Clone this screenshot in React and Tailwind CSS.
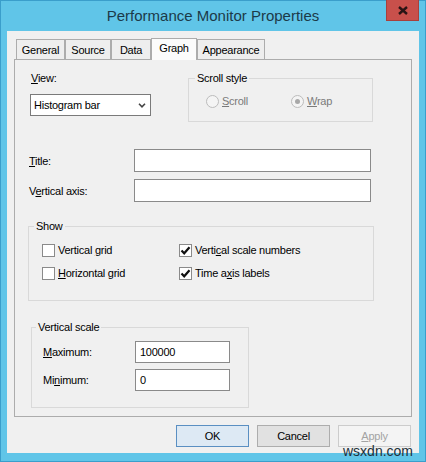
import React from 'react'

const U = ({ children }) => <span className="underline underline-offset-[1px]">{children}</span>

const Check = ({ checked }) => (
  <span className="w-[13px] h-[13px] border border-[#8a8a8a] bg-white flex items-center justify-center shrink-0">
    {checked && (
      <svg width="11" height="11" viewBox="0 0 11 11">
        <path d="M1.5 5.5 L4.2 8.3 L9.5 2.2" fill="none" stroke="#111" strokeWidth="2.2" />
      </svg>
    )}
  </span>
)

const Radio = ({ checked }) => (
  <span className="w-[13px] h-[13px] rounded-full border border-[#bcbcbc] bg-[#f4f4f4] flex items-center justify-center shrink-0">
    {checked && <span className="w-[5px] h-[5px] rounded-full bg-[#a8a8a8]" />}
  </span>
)

const Tab = ({ label, w, active }) =>
  active ? (
    <div className={`relative z-10 h-[22px] ${w} border border-b-0 border-[#acacac] bg-[#fbfbfb] flex justify-center pt-[1px]`}>
      {label}
    </div>
  ) : (
    <div className={`mt-[1px] h-[20px] ${w} border border-b-0 border-[#acacac] bg-[#eeeeee] flex justify-center pt-[2px]`}>
      {label}
    </div>
  )

const TextBox = ({ w, h, value }) => (
  <div className={`${w} ${h} border border-[#8a8a8a] bg-white flex items-center pl-[4px]`}>{value}</div>
)

export default function App() {
  return (
    <div className="relative w-[426px] h-[462px] bg-[#60c5e8] shadow-[inset_0_0_0_1px_#3a9ecb] flex flex-col px-[7px] pb-[9px] font-['Liberation_Sans',Arial,sans-serif] text-[11px] leading-[16px] tracking-[-0.25px] text-black">
      {/* title bar */}
      <div className="relative h-[31px] flex items-center justify-center shrink-0">
        <div className="text-[15px] leading-[31px] tracking-normal text-[#1c3a48]">Performance Monitor Properties</div>
        <div className="absolute right-0 top-0 w-[33px] h-[21px] bg-[#c8504b] border border-t-0 border-[#a8403c] flex items-center justify-center">
          <svg width="10" height="9" viewBox="0 0 10 9">
            <path d="M1 1 L9 8 M9 1 L1 8" stroke="#2a1414" strokeWidth="2.4" />
          </svg>
        </div>
      </div>

      {/* client */}
      <div className="flex-1 bg-[#f0f0f0] flex flex-col px-[7px] pt-[7px]">
        <div className="flex items-start h-[21px] pl-[2px]">
          <Tab label="General" w="w-[49px]" />
          <Tab label="Source" w="w-[46px]" />
          <Tab label="Data" w="w-[40px]" />
          <Tab label="Graph" w="w-[46px]" active />
          <Tab label="Appearance" w="w-[68px]" />
        </div>

        <div className="h-[358px] border border-[#acacac] bg-[#f0f0f0] flex flex-col">
          {/* view + scroll style */}
          <div className="flex items-start mt-[10px]">
            <div className="flex flex-col ml-[15px] w-[121px]">
              <div className="pl-[1px]"><U>V</U>iew:</div>
              <div className="mt-[8px] h-[22px] border border-[#7a7a7a] bg-white flex items-center justify-between pl-[3px] pr-[4px]">
                <span>Histogram bar</span>
                <svg width="8" height="5" viewBox="0 0 8 5">
                  <path d="M1 0.8 L4 3.8 L7 0.8" fill="none" stroke="#444" strokeWidth="1.6" />
                </svg>
              </div>
            </div>
            <fieldset className="ml-[37px] w-[185px] border border-[#d9d9d9] pl-[6px] pb-[12px]">
              <legend className="px-[2px]">Scroll style</legend>
              <div className="ml-[11px] mt-[7px] flex items-center text-[#7a7a7a]">
                <div className="w-[85px] flex items-center gap-[3px]">
                  <Radio />
                  <span><U>S</U>croll</span>
                </div>
                <div className="flex items-center gap-[3px]">
                  <Radio checked />
                  <span><U>W</U>rap</span>
                </div>
              </div>
            </fieldset>
          </div>

          {/* title / vertical axis */}
          <div className="flex items-center mt-[27px] ml-[14px]">
            <div className="w-[105px]"><U>T</U>itle:</div>
            <TextBox w="w-[237px]" h="h-[23px]" />
          </div>
          <div className="flex items-center mt-[7px] ml-[14px]">
            <div className="w-[105px]">V<U>e</U>rtical axis:</div>
            <TextBox w="w-[237px]" h="h-[23px]" />
          </div>

          {/* show */}
          <fieldset className="mt-[16px] ml-[13px] w-[346px] border border-[#d9d9d9] pl-[5px] pb-[19px]">
            <legend className="px-[2px]">Show</legend>
            <div className="ml-[8px] mt-[8px] flex items-center">
              <div className="w-[137px] flex items-center gap-[3px]">
                <Check />
                <span>Vertical <U>g</U>rid</span>
              </div>
              <div className="flex items-center gap-[3px]">
                <Check checked />
                <span>Verti<U>c</U>al scale numbers</span>
              </div>
            </div>
            <div className="ml-[8px] mt-[7px] flex items-center">
              <div className="w-[137px] flex items-center gap-[3px]">
                <Check />
                <span><U>H</U>orizontal grid</span>
              </div>
              <div className="flex items-center gap-[3px]">
                <Check checked />
                <span>Time a<U>x</U>is labels</span>
              </div>
            </div>
          </fieldset>

          {/* vertical scale */}
          <fieldset className="mt-[18px] ml-[16px] w-[218px] border border-[#d9d9d9] pl-[4px] pb-[16px]">
            <legend className="px-[2px]">Vertical scale</legend>
            <div className="ml-[7px] mt-[6px] flex items-center">
              <div className="w-[92px]"><U>M</U>aximum:</div>
              <TextBox w="w-[95px]" h="h-[22px]" value="100000" />
            </div>
            <div className="ml-[7px] mt-[6px] flex items-center">
              <div className="w-[92px]">Mi<U>n</U>imum:</div>
              <TextBox w="w-[95px]" h="h-[22px]" value="0" />
            </div>
          </fieldset>
        </div>

        {/* buttons */}
        <div className="flex justify-end gap-[8px] pr-[1px] mt-[8px]">
          <div className="w-[73px] h-[22px] border border-[#5a8fc2] bg-[#dde9f4] flex items-center justify-center">OK</div>
          <div className="w-[73px] h-[22px] border border-[#adadad] bg-[#e1e1e1] flex items-center justify-center">Cancel</div>
          <div className="w-[73px] h-[22px] border border-[#cccccc] bg-[#f4f4f4] flex items-center justify-center text-[#a3a3a3]"><U>A</U>pply</div>
        </div>
      </div>

      <div className="absolute left-[343px] top-[443px] text-[14px] leading-[16px] tracking-normal text-[#22303a]">wsxdn.com</div>
    </div>
  )
}
